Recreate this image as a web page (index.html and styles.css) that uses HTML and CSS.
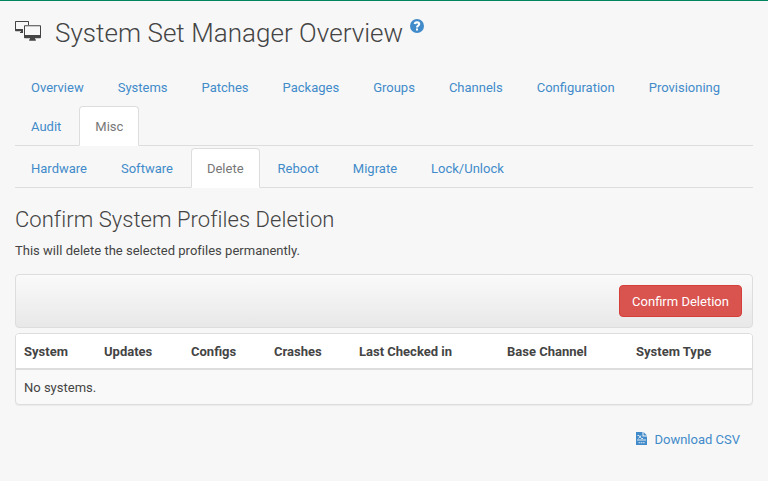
FILE: index.html
```html
<!DOCTYPE html>
<html lang="en">
<head>
<meta charset="utf-8">
<title>System Set Manager Overview</title>
<link rel="stylesheet" href="styles.css">
</head>
<body>
<header class="page-head">
  <svg class="icon-set" width="26" height="20" viewBox="0 0 26 20" aria-hidden="true">
    <path fill="#444" fill-rule="evenodd" d="M.8 0H13.200Q14 0 14 .8V4H13V1H1V8H8V12H5V11H6V10.300H.8Q0 10.300 0 9.500V.8Q0 0 .8 0Z"/>
    <path fill="#444" fill-rule="evenodd" d="M9.800 4.200H25.200Q26 4.200 26 5V16.200Q26 17.200 25.200 17.200H20V18.300H20.800V19.700H14.200V18.300H15V17.200H9.800Q9 17.200 9 16.200V5Q9 4.200 9.800 4.200ZM10 5.200V14H25V5.200Z"/>
  </svg>
  <h1>System Set Manager Overview</h1>
  <svg class="icon-help" width="14" height="14" viewBox="0 0 14 14" aria-hidden="true">
    <circle cx="7" cy="7" r="7" fill="#428bca"/>
    <path d="M4.700 5C5 2.700 9.300 2.900 9.200 5.200C9.100 6.600 7 6.600 7 8.400" fill="none" stroke="#fff" stroke-width="2.100"/>
    <path d="M6 9.500h2v2h-2z" fill="#fff"/>
  </svg>
</header>
<nav>
  <ul class="tabs">
    <li><a>Overview</a></li><li><a>Systems</a></li><li><a>Patches</a></li><li><a>Packages</a></li><li><a>Groups</a></li><li><a>Channels</a></li><li><a>Configuration</a></li><li><a>Provisioning</a></li><li><a>Audit</a></li><li class="active"><a>Misc</a></li>
  </ul>
  <ul class="tabs sub">
    <li><a>Hardware</a></li><li><a>Software</a></li><li class="active"><a>Delete</a></li><li><a>Reboot</a></li><li><a>Migrate</a></li><li><a>Lock/Unlock</a></li>
  </ul>
</nav>
<h2>Confirm System Profiles Deletion</h2>
<p>This will delete the selected profiles permanently.</p>
<div class="toolbar"><button>Confirm Deletion</button></div>
<div class="panel">
  <table>
    <colgroup><col class="c1"><col class="c2"><col class="c3"><col class="c4"><col class="c5"><col class="c6"><col></colgroup>
    <thead><tr><th>System</th><th>Updates</th><th>Configs</th><th>Crashes</th><th>Last Checked in</th><th>Base Channel</th><th>System Type</th></tr></thead>
    <tbody><tr><td colspan="7">No systems.</td></tr></tbody>
  </table>
</div>
<div class="download">
  <svg width="11" height="13" viewBox="0 0 11 13" aria-hidden="true">
    <path fill="#428bca" d="M0 0H6.500V4.500H11V13H0ZM7.500 0L11 3.500H7.500Z"/>
    <path stroke="#f7f7f7" stroke-width=".9" fill="none" d="M1.500 3.500H3L5.500 6.500H7M5 3.500L2.500 6.500M1 8H10"/>
    <path stroke="#b5d0e8" stroke-width="1.300" fill="none" d="M2.500 10.700H4.500M5 10.700H6.500M7 10.700H8.700"/>
  </svg>
  <a>Download CSV</a>
</div>
</body>
</html>
```
FILE: styles.css
```css
* { box-sizing: border-box; }
body {
  margin: 0;
  height: 481px;
  padding: 0 15px;
  border-top: 1px solid #00855c;
  background: #f7f7f7;
  color: #444;
  font: 13px/18px Roboto, sans-serif;
  overflow: hidden;
}
h1, h2, p, ul { margin: 0; padding: 0; }
.page-head { display: flex; height: 66px; }
.icon-set { margin-top: 20px; }
h1 { margin: 17px 0 0 14px; font-size: 26px; line-height: 30px; font-weight: 300; letter-spacing: .04px; white-space: nowrap; }
.icon-help { margin: 18px 0 0 7px; }
.tabs { display: flex; flex-wrap: wrap; list-style: none; height: 79px; border-bottom: 1px solid #ddd; }
.tabs.sub { height: 40px; margin-top: 2px; }
.tabs li { height: 39px; margin-right: 2px; }
.tabs a {
  display: block;
  height: 40px;
  padding: 11px 15px 9px;
  border: 1px solid transparent;
  border-radius: 4px 4px 0 0;
  color: #428bca;
  line-height: 18px;
}
.tabs .active a { background: #fff; color: #777; border-color: #ddd #ddd #fff; }
h2 { margin-top: 19px; font-size: 22px; line-height: 26px; font-weight: 300; letter-spacing: .05px; }
p { margin-top: 9px; letter-spacing: .015px; }
.toolbar {
  display: flex;
  justify-content: flex-end;
  height: 54px;
  margin-top: 14px;
  padding: 10px;
  border: 1px solid #ddd;
  border-radius: 4px;
  background: linear-gradient(#fafafa, #e8e8e8);
}
button {
  width: 123px;
  height: 32px;
  padding: 1px 0 0;
  border: 1px solid #d43f3a;
  border-radius: 4px;
  background: #d9534f;
  color: #fff;
  font: 13px/18px Roboto, sans-serif;
}
.panel {
  height: 72px;
  margin-top: 5px;
  border: 1px solid #ddd;
  border-radius: 4px;
  background: #f9f9f9;
  box-shadow: 0 1px 1px rgba(0, 0, 0, .05);
  overflow: hidden;
}
table { width: 100%; table-layout: fixed; border-collapse: separate; border-spacing: 0; }
th, td { padding: 2px 8px 0; text-align: left; white-space: nowrap; }
th { height: 36px; border-bottom: 2px solid #ddd; background: #fff; font-weight: 700; }
td { height: 34px; }
.c1 { width: 80px; }
.c2 { width: 87px; }
.c3 { width: 83px; }
.c4 { width: 85px; }
.c5 { width: 148px; }
.c6 { width: 129px; }
.download { display: flex; justify-content: flex-end; margin-top: 26px; padding-right: 13px; color: #428bca; }
.download svg { margin: 1px 7px 0 0; }
```
